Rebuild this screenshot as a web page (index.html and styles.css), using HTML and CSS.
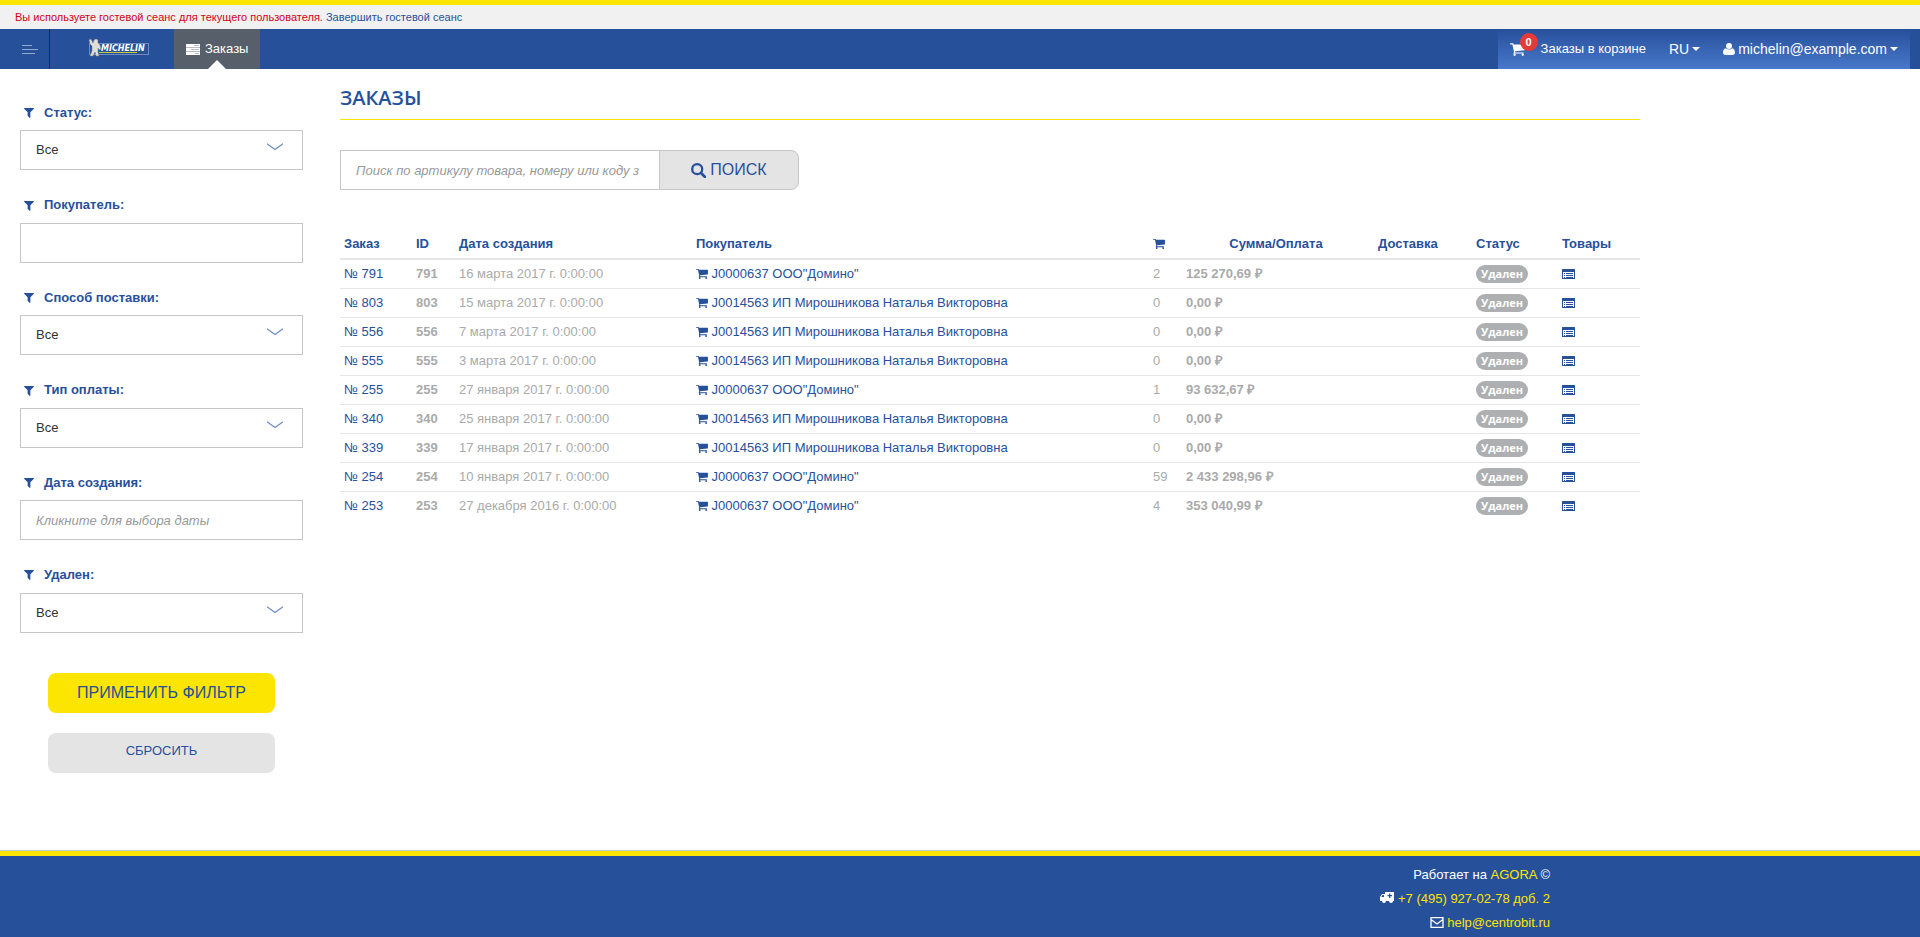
FILE: index.html
```html
<!DOCTYPE html>
<html lang="ru">
<head>
<meta charset="utf-8">
<title>Заказы</title>
<link rel="stylesheet" href="styles.css">
</head>
<body>
<svg class="sprite" aria-hidden="true">
  <symbol id="cart" viewBox="0 0 1664 1536"><path d="M640 1408q0 52-38 90t-90 38-90-38-38-90 38-90 90-38 90 38 38 90zm896 0q0 52-38 90t-90 38-90-38-38-90 38-90 90-38 90 38 38 90zm128-1088v512q0 24-16.500 42.500t-40.500 21.500l-1044 122q13 60 13 70 0 16-24 64h920q26 0 45 19t19 45-19 45-45 19h-1024q-26 0-45-19t-19-45q0-11 8-31.500t16-36 21.500-40 15.500-29.500l-177-823h-204q-26 0-45-19t-19-45 19-45 45-19h256q16 0 28.500 6.500t19.500 15.500 13 24.500 8 26 5.500 29.500 4.500 26h1201q26 0 45 19t19 45z"/></symbol>
  <symbol id="filter" viewBox="0 0 1408 1408"><path d="M1403 39q17 41-14 70l-493 493v742q0 42-39 59-13 5-25 5-27 0-45-19l-256-256q-19-19-19-45V602L19 109q-31-29-14-70Q22 0 64 0h1280q42 0 59 39z"/></symbol>
  <symbol id="user" viewBox="0 0 12 12"><circle cx="6" cy="3" r="3"/><path d="M2.800 5.200C1 5.400 0 7.300 0 9.600 0 11.100 1 12 2.400 12h7.200c1.400 0 2.400-.9 2.400-2.400 0-2.300-1-4.200-2.800-4.400a4.600 4.600 0 0 1-6.400 0z"/></symbol>
  <symbol id="list" viewBox="0 0 13 10"><path fill-rule="evenodd" d="M.5 0h12q.5 0 .5.500v9q0 .5-.5.500H.5Q0 10 0 9.500v-9Q0 0 .5 0zM1 3v6h11V3z"/><path d="M2 4h1v1H2zM4 4h7v1H4zM2 6h1v1H2zM4 6h7v1H4zM2 8h1v1H2zM4 8h7v1H4z"/></symbol>
</svg>

<header>
  <div class="guest-bar">Вы используете гостевой сеанс для текущего пользователя. <a href="#">Завершить гостевой сеанс</a></div>
  <nav class="navbar">
    <button class="menu-toggle" type="button" aria-label="Меню">
      <svg width="16" height="10" viewBox="0 0 16 10"><path d="M0 .5h10M0 4.500h16M0 8.500h13" stroke="#93a8cd" fill="none"/></svg>
    </button>
    <a class="logo" href="#" aria-label="Michelin">
      <svg width="62" height="20" viewBox="0 0 62 20">
        <rect x="1.500" y="5.500" width="59" height="11" fill="#27509b" stroke="#6f8cc0"/>
        <path d="M11 14.500h38" stroke="#c8c83a"/>
        <path d="M1 2l2-1 2 4 1-3q2-2 4 0l0 3 2 2 1 4-2 1-1-2 0 4 1 4-3 0-1-4-2 4-3 0 2-5 0-5-2-2z" fill="#deded8" stroke="#77797c" stroke-width=".5"/>
        <text class="logo-text" x="13" y="13">MICHELIN</text>
      </svg>
    </a>
    <a class="tab" href="#">
      <svg width="14" height="11" viewBox="0 0 14 11"><path fill="#fff" d="M0 0h14v11H0z"/><path fill="#b9bdc3" d="M8 1h5v1H8zM0 3h14v1H0zM5 5h8v1H5zM0 7h14v1H0zM9 9h4v1H9z"/></svg>
      Заказы
    </a>
    <div class="user-nav">
      <a class="basket" href="#">
        <span class="basket-icon"><svg width="15" height="14"><use href="#cart"/></svg><span class="count">0</span></span>
        Заказы в корзине
      </a>
      <button class="nav-button" type="button">RU <span class="caret"></span></button>
      <button class="nav-button" type="button"><svg width="12" height="12"><use href="#user"/></svg> michelin@example.com <span class="caret"></span></button>
    </div>
  </nav>
</header>

<main>
  <form class="filters">
    <div class="field"><label for="status"><svg width="10" height="10"><use href="#filter"/></svg>Статус:</label><select id="status"><option>Все</option></select></div>
    <div class="field"><label for="buyer"><svg width="10" height="10"><use href="#filter"/></svg>Покупатель:</label><input id="buyer" type="text"></div>
    <div class="field"><label for="delivery"><svg width="10" height="10"><use href="#filter"/></svg>Способ поставки:</label><select id="delivery"><option>Все</option></select></div>
    <div class="field"><label for="payment"><svg width="10" height="10"><use href="#filter"/></svg>Тип оплаты:</label><select id="payment"><option>Все</option></select></div>
    <div class="field"><label for="created"><svg width="10" height="10"><use href="#filter"/></svg>Дата создания:</label><input id="created" type="text" placeholder="Кликните для выбора даты"></div>
    <div class="field"><label for="deleted"><svg width="10" height="10"><use href="#filter"/></svg>Удален:</label><select id="deleted"><option>Все</option></select></div>
    <div class="actions">
      <button class="apply" type="submit">ПРИМЕНИТЬ ФИЛЬТР</button>
      <button class="reset" type="reset">СБРОСИТЬ</button>
    </div>
  </form>

  <section class="content">
    <h1>ЗАКАЗЫ</h1>
    <form class="search">
      <input type="text" aria-label="Поиск" placeholder="Поиск по артикулу товара, номеру или коду заказа">
      <button type="submit"><svg width="15" height="15" viewBox="0 0 15 15"><circle cx="6.200" cy="6.200" r="5" fill="none" stroke="currentColor" stroke-width="2.300"/><path d="M10 10l4 4" stroke="currentColor" stroke-width="2.600" stroke-linecap="round"/></svg> ПОИСК</button>
    </form>
    <table>
      <colgroup><col class="c-order"><col class="c-id"><col class="c-date"><col class="c-buyer"><col class="c-count"><col class="c-sum"><col class="c-delivery"><col class="c-status"><col class="c-goods"></colgroup>
      <thead><tr><th>Заказ</th><th>ID</th><th>Дата создания</th><th>Покупатель</th><th aria-label="Количество"><svg width="12" height="11"><use href="#cart"/></svg></th><th class="center">Сумма/Оплата</th><th>Доставка</th><th>Статус</th><th>Товары</th></tr></thead>
      <tbody>
        <tr><td><a href="#">№ 791</a></td><td><b>791</b></td><td>16 марта 2017 г. 0:00:00</td><td><a href="#"><svg width="12" height="11"><use href="#cart"/></svg> J0000637 ООО"Домино"</a></td><td>2</td><td><b>125 270,69 ₽</b></td><td></td><td><span class="badge">Удален</span></td><td><a href="#" aria-label="Товары"><svg width="13" height="10"><use href="#list"/></svg></a></td></tr>
        <tr><td><a href="#">№ 803</a></td><td><b>803</b></td><td>15 марта 2017 г. 0:00:00</td><td><a href="#"><svg width="12" height="11"><use href="#cart"/></svg> J0014563 ИП Мирошникова Наталья Викторовна</a></td><td>0</td><td><b>0,00 ₽</b></td><td></td><td><span class="badge">Удален</span></td><td><a href="#" aria-label="Товары"><svg width="13" height="10"><use href="#list"/></svg></a></td></tr>
        <tr><td><a href="#">№ 556</a></td><td><b>556</b></td><td>7 марта 2017 г. 0:00:00</td><td><a href="#"><svg width="12" height="11"><use href="#cart"/></svg> J0014563 ИП Мирошникова Наталья Викторовна</a></td><td>0</td><td><b>0,00 ₽</b></td><td></td><td><span class="badge">Удален</span></td><td><a href="#" aria-label="Товары"><svg width="13" height="10"><use href="#list"/></svg></a></td></tr>
        <tr><td><a href="#">№ 555</a></td><td><b>555</b></td><td>3 марта 2017 г. 0:00:00</td><td><a href="#"><svg width="12" height="11"><use href="#cart"/></svg> J0014563 ИП Мирошникова Наталья Викторовна</a></td><td>0</td><td><b>0,00 ₽</b></td><td></td><td><span class="badge">Удален</span></td><td><a href="#" aria-label="Товары"><svg width="13" height="10"><use href="#list"/></svg></a></td></tr>
        <tr><td><a href="#">№ 255</a></td><td><b>255</b></td><td>27 января 2017 г. 0:00:00</td><td><a href="#"><svg width="12" height="11"><use href="#cart"/></svg> J0000637 ООО"Домино"</a></td><td>1</td><td><b>93 632,67 ₽</b></td><td></td><td><span class="badge">Удален</span></td><td><a href="#" aria-label="Товары"><svg width="13" height="10"><use href="#list"/></svg></a></td></tr>
        <tr><td><a href="#">№ 340</a></td><td><b>340</b></td><td>25 января 2017 г. 0:00:00</td><td><a href="#"><svg width="12" height="11"><use href="#cart"/></svg> J0014563 ИП Мирошникова Наталья Викторовна</a></td><td>0</td><td><b>0,00 ₽</b></td><td></td><td><span class="badge">Удален</span></td><td><a href="#" aria-label="Товары"><svg width="13" height="10"><use href="#list"/></svg></a></td></tr>
        <tr><td><a href="#">№ 339</a></td><td><b>339</b></td><td>17 января 2017 г. 0:00:00</td><td><a href="#"><svg width="12" height="11"><use href="#cart"/></svg> J0014563 ИП Мирошникова Наталья Викторовна</a></td><td>0</td><td><b>0,00 ₽</b></td><td></td><td><span class="badge">Удален</span></td><td><a href="#" aria-label="Товары"><svg width="13" height="10"><use href="#list"/></svg></a></td></tr>
        <tr><td><a href="#">№ 254</a></td><td><b>254</b></td><td>10 января 2017 г. 0:00:00</td><td><a href="#"><svg width="12" height="11"><use href="#cart"/></svg> J0000637 ООО"Домино"</a></td><td>59</td><td><b>2 433 298,96 ₽</b></td><td></td><td><span class="badge">Удален</span></td><td><a href="#" aria-label="Товары"><svg width="13" height="10"><use href="#list"/></svg></a></td></tr>
        <tr><td><a href="#">№ 253</a></td><td><b>253</b></td><td>27 декабря 2016 г. 0:00:00</td><td><a href="#"><svg width="12" height="11"><use href="#cart"/></svg> J0000637 ООО"Домино"</a></td><td>4</td><td><b>353 040,99 ₽</b></td><td></td><td><span class="badge">Удален</span></td><td><a href="#" aria-label="Товары"><svg width="13" height="10"><use href="#list"/></svg></a></td></tr>
      </tbody>
    </table>
  </section>
</main>

<footer>
  <div class="contacts">
    <div>Работает на <a href="#">AGORA</a> ©</div>
    <div><svg width="14" height="12" viewBox="0 0 14 12"><path fill="#fff" fill-rule="evenodd" d="M5 0h9v9h-1a2 2 0 0 1-4 0H6a2 2 0 0 1-4 0H0V5l2-3h3zM2.500 3L1.300 5H4V3zM9 1.500V3H7.500v1.300H9V6h1.300V4.300H12V3h-1.700V1.500z"/></svg> <a href="#">+7 (495) 927-02-78 доб. 2</a></div>
    <div><svg width="14" height="11" viewBox="0 0 14 11"><path d="M1 .7h12v9.600H1zM1 2.500l6 4.500 6-4.500" fill="none" stroke="#fff" stroke-width="1.300"/></svg> <a href="#">help@centrobit.ru</a></div>
  </div>
</footer>
</body>
</html>
```

FILE: styles.css
```css
* { box-sizing: border-box; }

body {
  margin: 0;
  min-height: 100vh;
  display: flex;
  flex-direction: column;
  background: #fff;
  color: #333;
  font: 13px/18px "Liberation Sans", Arial, sans-serif;
}

a { color: #27509b; text-decoration: none; }
svg { fill: currentColor; }
button, input, select { font: inherit; }
button { cursor: pointer; }
.sprite { position: absolute; width: 0; height: 0; }

.guest-bar {
  padding: 0 15px;
  border-top: 5px solid #fce500;
  background: #f1f1f1;
  color: #d0021b;
  font-size: 11px;
  line-height: 24px;
}

.navbar {
  display: flex;
  height: 40px;
  background: #27509b;
  color: #fff;
}

.menu-toggle {
  width: 50px;
  padding: 4px 0 0 11px;
  border: 0;
  border-right: 1px solid #1c2b4a;
  background: none;
}

.logo {
  display: flex;
  align-items: center;
  padding: 0 24px 2px 38px;
}

.logo-text {
  fill: #fff;
  font: italic bold 8px "DejaVu Sans", sans-serif;
}

.tab {
  position: relative;
  display: flex;
  align-items: center;
  gap: 5px;
  padding: 0 12px;
  background: #575f6a;
  color: #fff;
}

.tab::after {
  content: "";
  position: absolute;
  bottom: 0;
  left: calc(50% - 9px);
  border: 9px solid transparent;
  border-top: 0;
  border-bottom-color: #fff;
}

.user-nav {
  display: flex;
  align-items: center;
  gap: 23px;
  margin: 0 10px 0 auto;
  padding: 0 12px;
  background: linear-gradient(#27509b, #4878cb);
}

.basket { display: flex; align-items: center; gap: 16px; color: #fff; }
.basket-icon { position: relative; display: flex; }

.count {
  position: absolute;
  top: -9px;
  left: 10px;
  width: 18px;
  border-radius: 9px;
  background: #e53a3a;
  font-size: 11px;
  font-weight: bold;
  text-align: center;
}

.nav-button {
  display: flex;
  align-items: center;
  gap: 3px;
  padding: 0;
  border: 0;
  background: none;
  color: #fff;
  font-size: 14px;
}

.caret {
  border: 4px solid transparent;
  border-top-color: #fff;
  border-bottom: 0;
}

main { display: flex; flex: 1; gap: 37px; padding: 0 20px; }

.filters { width: 283px; padding-top: 35px; flex: none; }
.field { margin-bottom: 26px; }

.field label {
  display: flex;
  align-items: center;
  gap: 10px;
  padding: 0 4px 8px;
  color: #27509b;
  font-weight: bold;
  line-height: 1.42;
}

.field input, .field select, .search input {
  display: block;
  width: 100%;
  height: 40px;
  padding: 0 15px;
  border: 1px solid #c6c6c6;
  border-radius: 0;
  background: #fff;
  color: #333;
}

.field select {
  appearance: none;
  background: url("data:image/svg+xml,%3Csvg xmlns='http://www.w3.org/2000/svg' width='16' height='8'%3E%3Cpath d='M0 .8l8 5.700 8-5.700' fill='none' stroke='%236d8dc4' stroke-width='1.300'/%3E%3C/svg%3E") no-repeat right 19px top 12px;
}

::placeholder { color: #999; font-style: italic; opacity: 1; }

.actions {
  display: flex;
  flex-direction: column;
  gap: 20px;
  padding: 14px 28px 40px;
}

.apply, .reset {
  height: 40px;
  padding: 0;
  border: 0;
  border-radius: 8px;
  background: #fce500;
  color: #27509b;
  font-size: 16px;
}

.reset { padding-bottom: 4px; background: #e4e4e4; font-size: 13px; }

.content { flex: 1; min-width: 0; max-width: 1300px; }

h1 {
  margin: 0 0 30px;
  padding: 15px 0 7px;
  border-bottom: 1px solid #fce500;
  color: #27509b;
  font: 600 20px/28px "Open Sans", sans-serif;
}

.search { display: flex; margin-bottom: 40px; }
.search input { width: 320px; padding-right: 20px; }

.search button {
  display: flex;
  align-items: center;
  justify-content: center;
  gap: 4px;
  width: 140px;
  margin-left: -1px;
  padding: 0;
  border: 1px solid #c6c6c6;
  border-radius: 0 8px 8px 0;
  background: #e4e4e4;
  color: #27509b;
  font-size: 16px;
}

table { width: 100%; border-collapse: collapse; table-layout: fixed; }
th, td { height: 29px; padding: 0 4px; text-align: left; white-space: nowrap; }
th { border-bottom: 2px solid #e6e6e6; color: #27509b; }
td { border-bottom: 1px solid #e6e6e6; color: #aaa; }
tr:last-child td { border-bottom: 0; }
th svg, td svg { vertical-align: -1px; }
th.center { padding-right: 8px; text-align: center; }

.c-order { width: 72px; }
.c-id { width: 43px; }
.c-date { width: 237px; }
.c-count { width: 33px; }
.c-sum { width: 192px; }
.c-delivery { width: 98px; }
.c-status { width: 86px; }
.c-goods { width: 82px; }

.badge {
  display: inline-block;
  padding: 0 5px;
  border-radius: 9px;
  background: #adafb1;
  color: #fff;
  font: bold 11px/18px "Open Sans", sans-serif;
}

footer {
  border-top: 1px solid #ccc;
  background: #27509b;
  color: #fff;
}

.contacts {
  padding: 7px 370px 2px 0;
  border-top: 5px solid #fce500;
  line-height: 24px;
  text-align: right;
}

.contacts svg { vertical-align: -1px; }
.contacts a { color: #fce500; }
```
